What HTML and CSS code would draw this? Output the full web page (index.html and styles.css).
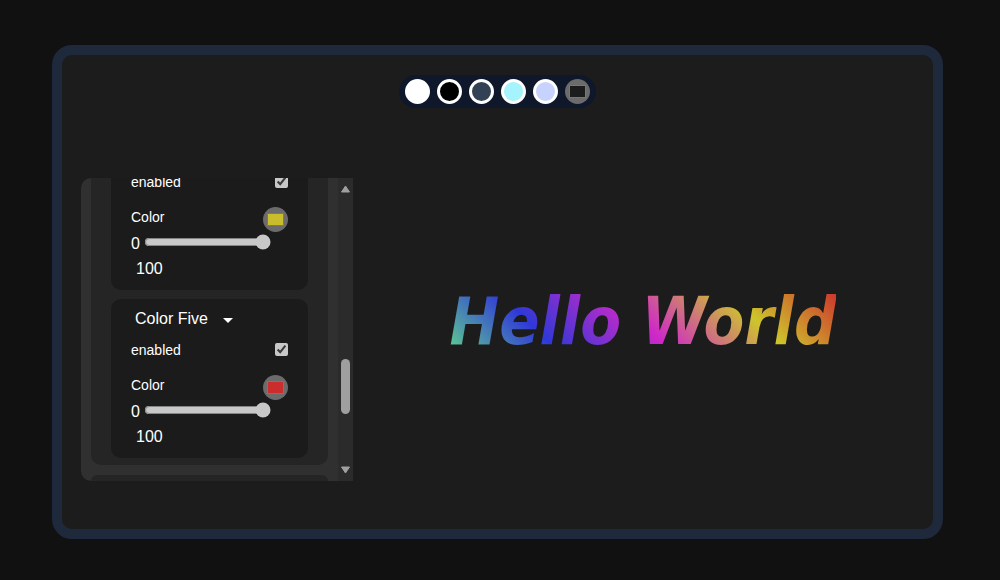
FILE: index.html
```html
<!DOCTYPE html>
<html lang="en">
<head>
    <meta charset="UTF-8">
    <meta name="viewport" content="width=device-width, initial-scale=1.0">
    <title>Gradient Text</title>
    <link rel="stylesheet" href="styles.css">
</head>
<body>

    <main class="frame">
        <div class="toolbar">
            <button type="button" class="dot white" aria-label="White background"></button>
            <button type="button" class="dot black" aria-label="Black background"></button>
            <button type="button" class="dot slate" aria-label="Slate background"></button>
            <button type="button" class="dot cyan" aria-label="Cyan background"></button>
            <button type="button" class="dot lavender" aria-label="Lavender background"></button>
            <input type="color" class="picker" value="#1c1c1c" aria-label="Custom background">
        </div>

        <div class="stage">
            <aside class="panel">
                <div class="panel-content">
                    <section class="group">
                        <div class="card">
                            <button type="button" class="card-title">Color Four
                                <svg width="10" height="5" viewBox="0 0 10 5"><path d="M0 0h10L5 5z" fill="currentColor"/></svg>
                            </button>
                            <div class="row">
                                <label for="enabled4">enabled</label>
                                <input type="checkbox" id="enabled4" checked>
                            </div>
                            <div class="row color-row">
                                <label for="color4">Color</label>
                                <input type="color" class="picker" id="color4" value="#c9bd2c">
                            </div>
                            <div class="range-row">
                                <label for="stop4">0</label>
                                <input type="range" id="stop4" min="0" max="100" value="100">
                            </div>
                            <div class="range-max">100</div>
                        </div>

                        <div class="card">
                            <button type="button" class="card-title">Color Five
                                <svg width="10" height="5" viewBox="0 0 10 5"><path d="M0 0h10L5 5z" fill="currentColor"/></svg>
                            </button>
                            <div class="row">
                                <label for="enabled5">enabled</label>
                                <input type="checkbox" id="enabled5" checked>
                            </div>
                            <div class="row color-row">
                                <label for="color5">Color</label>
                                <input type="color" class="picker" id="color5" value="#cb2d2d">
                            </div>
                            <div class="range-row">
                                <label for="stop5">0</label>
                                <input type="range" id="stop5" min="0" max="100" value="100">
                            </div>
                            <div class="range-max">100</div>
                        </div>
                    </section>
                    <section class="group next"></section>
                </div>
                <div class="scrollbar">
                    <svg width="9" height="8" viewBox="0 0 9 8"><path d="M4.5 1L8.5 7H.5z" fill="#9f9f9f" stroke="#9f9f9f" stroke-linejoin="round"/></svg>
                    <div class="track">
                        <div class="thumb"></div>
                    </div>
                    <svg width="9" height="8" viewBox="0 0 9 8"><path d="M.5 1h8l-4 6z" fill="#9f9f9f" stroke="#9f9f9f" stroke-linejoin="round"/></svg>
                </div>
            </aside>

            <div class="preview">
                <h1 class="hello">Hello World</h1>
            </div>
        </div>
    </main>

</body>
</html>
```
FILE: styles.css
```css
* {
    box-sizing: border-box;
}
body {
    margin: 0;
    min-height: 100vh;
    padding: 45px 57px 41px 52px;
    display: flex;
    background: #111111;
    color: white;
    font-family: "Liberation Sans", Arial, sans-serif;
    font-size: 14px;
}
.frame {
    flex: 1;
    display: flex;
    flex-direction: column;
    align-items: center;
    padding: 20px 0 0 19px;
    background: #1c1c1c;
    border: 10px solid #1e293b;
    border-radius: 20px;
}

/* background colors */
.toolbar {
    display: flex;
    gap: 7px;
    margin-right: 19px;
    padding: 4px 6px;
    background: #0f172a;
    border-radius: 17px;
}
.dot {
    width: 25px;
    height: 25px;
    padding: 0;
    border: 3px solid white;
    border-radius: 50%;
    cursor: pointer;
}
.white {
    background: white;
}
.black {
    background: black;
}
.slate {
    background: #334155;
}
.cyan {
    background: #a5f3fc;
}
.lavender {
    background: #c7d2fe;
}
.picker {
    appearance: none;
    width: 25px;
    height: 25px;
    padding: 6px 4px;
    background: #6b6b6b;
    border: none;
    border-radius: 50%;
    cursor: pointer;
}
.picker::-webkit-color-swatch-wrapper {
    padding: 0;
}
.picker::-webkit-color-swatch {
    border: 1px solid #777777;
}

.stage {
    flex: 1;
    align-self: stretch;
    display: flex;
    align-items: center;
    padding-top: 22px;
}

/* settings panel */
.panel {
    display: flex;
    width: 272px;
    height: 303px;
    background: #303030;
    border-radius: 10px 0 0 10px;
    overflow: hidden;
}
.panel-content {
    flex: 1;
    display: flex;
    flex-direction: column;
    justify-content: flex-end;
    gap: 10px;
    padding: 0 10px;
    overflow: hidden;
}
.group {
    flex-shrink: 0;
    display: flex;
    flex-direction: column;
    gap: 9px;
    padding: 7px 20px;
    background: #252525;
    border-radius: 10px;
}
.next {
    height: 6px;
    padding: 0;
    border-radius: 10px 10px 0 0;
}
.card {
    padding: 0 20px 5px;
    background: #1b1b1b;
    border-radius: 10px;
}
.card-title {
    display: flex;
    align-items: center;
    gap: 15px;
    height: 38px;
    padding: 2px 4px 0;
    background: none;
    border: none;
    color: white;
    font-family: inherit;
    font-size: 16px;
    cursor: pointer;
}
.card-title svg {
    margin-top: 2px;
}
.row {
    display: flex;
    align-items: center;
    justify-content: space-between;
    height: 25px;
}
.row input[type="checkbox"] {
    width: 13px;
    height: 13px;
    margin: 0;
    accent-color: #c8c8c8;
}
.color-row {
    align-items: flex-start;
    height: 24px;
    margin-top: 13px;
    line-height: 20px;
}
.range-row {
    display: flex;
    align-items: center;
    height: 22px;
    font-size: 16px;
}
.range-row label {
    padding-top: 4px;
}
.range-row input {
    width: 127px;
    margin: 0 4px;
    accent-color: #c8c8c8;
}
.range-max {
    padding-left: 5px;
    font-size: 16px;
    line-height: 32px;
}

.scrollbar {
    display: flex;
    flex-direction: column;
    align-items: center;
    width: 15px;
    padding: 7px 0;
    background: #2b2b2b;
}
.track {
    flex: 1;
    display: flex;
    flex-direction: column;
    justify-content: flex-end;
    padding-bottom: 52px;
}
.thumb {
    width: 9px;
    height: 55px;
    background: #9f9f9f;
    border-radius: 5px;
}

.preview {
    flex: 1;
    display: flex;
    justify-content: center;
    padding-bottom: 15px;
}
.hello {
    margin: 0;
    background: linear-gradient(45deg, #62d68a, #3038d8, #cf28c8, #cdc52c, #cd2d2d);
    background-clip: text;
    -webkit-background-clip: text;
    color: transparent;
    font-family: "DejaVu Sans Condensed", "DejaVu Sans", sans-serif;
    font-size: 66px;
    font-style: italic;
    font-weight: bold;
    line-height: 72px;
}
```
